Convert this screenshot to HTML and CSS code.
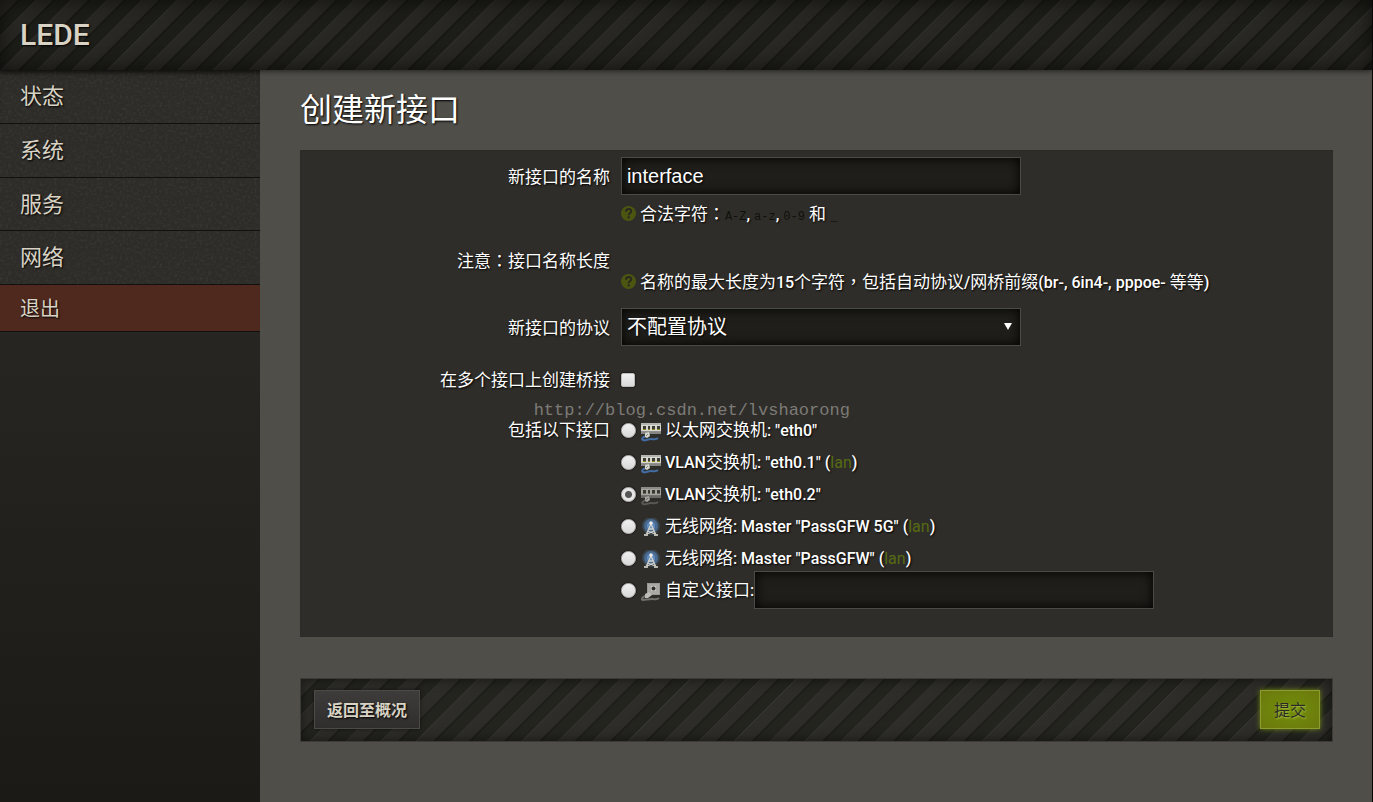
FILE: index.html
```html
<!DOCTYPE html>
<html lang="zh-CN">
<head>
<meta charset="utf-8">
<title>LEDE - 创建新接口</title>
<link rel="stylesheet" href="styles.css">
</head>
<body>
<svg class="defs" width="0" height="0" aria-hidden="true">
  <defs>
    <symbol id="help" viewBox="0 0 15 15">
      <circle cx="7.500" cy="7.500" r="7.500" fill="#4d5611"/>
      <path d="M5 5.800C5 4 6.100 3.100 7.600 3.100S10.200 4 10.200 5.400C10.200 7 7.700 7.100 7.700 9.300" fill="none" stroke="#292a1d" stroke-width="2"/>
      <rect x="6.600" y="10.300" width="2.200" height="2" fill="#292a1d"/>
    </symbol>
    <symbol id="switch" viewBox="0 0 20 20">
      <path d="M0 1h20v11H0z" fill="#8f8f8b"/>
      <path d="M0 1h20v2H0z" fill="#b4b4b0"/>
      <path d="M0 3h20v6H0z" fill="#d9d8d0"/>
      <path d="M2 4h3v3H2zM7 4h2v3H7zM11 4h3v3h-3zM16 4h3v3h-3z" fill="#3c3c33"/>
      <path d="M0 10h20v2H0z" fill="#858581"/>
      <path class="lamp" d="M2 7h3v1H2zM7 7h2v1H7zM11 7h3v1h-3zM16 7h3v1h-3z"/>
      <path class="cable" d="M5 14c-3 1-5 3-3 4 2 1 5-1 8-1s5 1 7-1" fill="none" stroke-width="2"/>
      <path d="M4 11l4-1 1 4-3 2-2-1z" fill="#d5d5ce"/>
      <path d="M5 14l2-2" stroke="#888882"/>
    </symbol>
    <symbol id="wifi" viewBox="0 0 20 20">
      <circle cx="10" cy="8" r="9" fill="#4c7297" opacity=".35"/>
      <circle cx="10" cy="8" r="7" fill="#5280b5" opacity=".65"/>
      <circle cx="10" cy="8" r="4" fill="#6998cf" opacity=".75"/>
      <path d="M10 6l-5 11M10 6l5 11M7 13l7 3M13 13l-7 3M8 11h4" fill="none" stroke="#d2d1c9" stroke-width="1.300"/>
      <path d="M3 17h4M13 17h4" stroke="#b8b8b1" stroke-width="2"/>
      <circle cx="10" cy="5" r="1.800" fill="#eeeeea"/>
    </symbol>
    <symbol id="adapter" viewBox="0 0 20 20">
      <path d="M6 1h13v12H6z" fill="#9a9a95"/>
      <path d="M7 2h11v10H7z" fill="#aaa9a5"/>
      <path d="M10 4h5v5h-5z" fill="#c9c9c3"/>
      <circle cx="12.500" cy="6.500" r="2" fill="#302f2b"/>
      <path d="M4 14c-3 1-4 4-2 4s6-1 9-1 5 1 7-1" fill="none" stroke="#73726e" stroke-width="2"/>
      <path d="M4 12l4-2 3 3-4 3H4z" fill="#bdbdb7"/>
    </symbol>
  </defs>
</svg>

<header class="topbar"><a class="brand" href="#">LEDE</a></header>

<div class="layout">
  <nav class="sidebar">
    <a class="nav-item" href="#">状态</a>
    <a class="nav-item" href="#">系统</a>
    <a class="nav-item" href="#">服务</a>
    <a class="nav-item" href="#">网络</a>
    <a class="nav-item logout" href="#">退出</a>
  </nav>

  <main class="content">
    <h1 class="title">创建新接口</h1>
    <form>
      <div class="panel">
        <div class="row name-row">
          <label class="label tall" for="name">新接口的名称</label>
          <div class="field">
            <input class="text" id="name" type="text" value="interface">
            <p class="hint"><svg class="help"><use href="#help"/></svg>合法字符<span class="mark" lang="zh-TW">：</span><code>A-Z</code><b>, </b><code>a-z</code><b>, </b><code>0-9</code> 和 <code>_</code></p>
          </div>
        </div>
        <div class="row length-row">
          <span class="label">注意<span class="mark" lang="zh-TW">：</span>接口名称长度</span>
          <div class="field">
            <p class="hint lowered"><svg class="help"><use href="#help"/></svg>名称的最大长度为<b>15</b>个字符<span class="mark" lang="zh-TW">，</span>包括自动协议<b>/</b>网桥前缀<b>(br-, 6in4-, pppoe- </b>等等<b>)</b></p>
          </div>
        </div>
        <div class="row">
          <label class="label tall" for="proto">新接口的协议</label>
          <div class="field">
            <span class="select-box"><select class="text select" id="proto"><option>不配置协议</option></select></span>
          </div>
        </div>
        <div class="row">
          <label class="label" for="bridge">在多个接口上创建桥接</label>
          <div class="field check-field"><input class="check" id="bridge" type="checkbox"></div>
        </div>
        <div class="row">
          <span class="label ports-label" id="ports">包括以下接口</span>
          <div class="field ports" role="radiogroup" aria-labelledby="ports">
            <span class="watermark">http://blog.csdn.net/lvshaorong</span>
            <div class="port"><input class="radio" type="radio" name="port" id="p0"><label class="port-name" for="p0"><svg class="icon live"><use href="#switch"/></svg><span>以太网交换机<b>: "eth0"</b></span></label></div>
            <div class="port"><input class="radio" type="radio" name="port" id="p1"><label class="port-name" for="p1"><svg class="icon live"><use href="#switch"/></svg><span><b>VLAN</b>交换机<b>: "eth0.1" (<a class="net" href="#">lan</a>)</b></span></label></div>
            <div class="port"><input class="radio" type="radio" name="port" id="p2" checked><label class="port-name" for="p2"><svg class="icon off"><use href="#switch"/></svg><span><b>VLAN</b>交换机<b>: "eth0.2"</b></span></label></div>
            <div class="port"><input class="radio" type="radio" name="port" id="p3"><label class="port-name" for="p3"><svg class="icon"><use href="#wifi"/></svg><span>无线网络<b>: Master "PassGFW 5G" (<a class="net" href="#">lan</a>)</b></span></label></div>
            <div class="port"><input class="radio" type="radio" name="port" id="p4"><label class="port-name" for="p4"><svg class="icon"><use href="#wifi"/></svg><span>无线网络<b>: Master "PassGFW" (<a class="net" href="#">lan</a>)</b></span></label></div>
            <div class="port"><input class="radio" type="radio" name="port" id="p5"><label class="port-name" for="p5"><svg class="icon"><use href="#adapter"/></svg><span>自定义接口<b>:</b></span></label><input class="text" type="text" aria-label="自定义接口"></div>
          </div>
        </div>
      </div>
      <div class="actions">
        <button class="button back" type="button">返回至概况</button>
        <button class="button submit" type="submit">提交</button>
      </div>
    </form>
  </main>
</div>
</body>
</html>
```
FILE: styles.css
```css
* { box-sizing: border-box; }

body {
  margin: 0;
  min-height: 100vh;
  display: flex;
  flex-direction: column;
  background: #4f4e49;
  border-right: 1px solid #080807;
  color: #fff;
  font: 17px/24px Roboto, "Noto Sans CJK SC", sans-serif;
  text-shadow: 1px 1px 2px #000;
}

b { font-weight: 500; font-size: 16px; }
.defs { position: absolute; }
.mark { font-family: "Noto Sans CJK TC", sans-serif; line-height: 1; }

.topbar {
  position: relative;
  height: 70px;
  display: flex;
  align-items: center;
  padding: 0 20px;
  background: repeating-linear-gradient(135deg,
    #30312c 0, #292824 1px, #272622 12px,
    #151611 13px, #1c1d18 15px, #1c1d18 25px);
  box-shadow: inset 0 0 20px #0009, 0 1px 6px #0009;
}

.brand {
  color: #d8d3c4;
  font-size: 30px;
  font-weight: 500;
  line-height: 40px;
  text-decoration: none;
}

.layout { flex: 1; display: flex; }

.sidebar {
  width: 260px;
  flex: none;
  background: linear-gradient(#2d2c28, #1b1a16);
}

.nav-item {
  display: block;
  height: 54px;
  padding-left: 20px;
  border-bottom: 1px solid #10100e;
  background: url("data:image/svg+xml,%3Csvg xmlns='http://www.w3.org/2000/svg' width='100' height='54'%3E%3Cfilter id='n'%3E%3CfeTurbulence type='fractalNoise' baseFrequency='.35' numOctaves='3' stitchTiles='stitch'/%3E%3CfeColorMatrix values='0 0 0 0 .5 0 0 0 0 .5 0 0 0 0 .45 .9 0 0 0 -.42'/%3E%3C/filter%3E%3Crect width='100' height='54' filter='url(%23n)' opacity='.2'/%3E%3C/svg%3E") #2d2c28;
  color: #d8d3c4;
  font-size: 22px;
  line-height: 54px;
  text-decoration: none;
}

.nav-item:first-child { box-shadow: inset 0 5px 5px -3px #0007; }

.nav-item:nth-child(3) { height: 53px; }

.nav-item.logout {
  height: 47px;
  background: #50291e;
  font-size: 20px;
  line-height: 48px;
}

.content { flex: 1; min-width: 0; padding: 20px 39px 20px 40px; }

.title {
  margin: 0 0 20px;
  font-size: 32px;
  font-weight: 400;
  line-height: 40px;
}

.panel {
  padding: 7px 0 9px;
  background: #2f2d29;
  box-shadow: inset 0 0 1px #201f1c;
}

.row {
  display: grid;
  grid-template-columns: 30% 1fr;
  column-gap: 11px;
  margin-bottom: 22px;
}
.name-row { margin-bottom: 23px; }
.length-row { margin-bottom: 14px; }

.label { text-align: right; }
.tall { height: 38px; line-height: 40px; }
.ports-label { line-height: 32px; }

.text {
  width: 400px;
  height: 38px;
  padding: 0 5px;
  border: 1px solid #4b4a46;
  border-radius: 0;
  background: #1f1e1a;
  box-shadow: inset 0 0 12px #000;
  color: #fff;
  font: 20px "Liberation Sans", "Noto Sans CJK SC", sans-serif;
  text-shadow: inherit;
}

.field > .text { display: block; }
.select-box { position: relative; display: block; width: 400px; }
.select { display: block; appearance: none; }
.select-box::after {
  content: "";
  position: absolute;
  right: 9px;
  top: 15px;
  border: 4px solid transparent;
  border-top: 7px solid #fff;
  border-bottom: 0;
}

.hint { height: 24px; margin: 7px 0 0; }
.lowered { margin-top: 21px; }
.help { width: 15px; height: 15px; margin-right: 4px; vertical-align: -1px; }

code {
  color: #10100d;
  font: 12px "Liberation Mono", monospace;
  text-shadow: none;
}

.check-field { display: flex; align-items: center; }

.check, .radio {
  appearance: none;
  flex: none;
  margin: 0;
  border: 1px solid #bcbcbc;
  background: linear-gradient(#f0f0f0, #d9d9d9);
  box-shadow: 0 0 2px #000;
}
.check { width: 14px; height: 14px; border-radius: 2px; }
.radio { width: 15px; height: 15px; border-radius: 50%; }
.radio:checked { background: radial-gradient(circle, #555 3px, #e5e5e5 4px); }

.ports { position: relative; }
.port { display: flex; align-items: center; height: 32px; }
.port-name { display: flex; align-items: center; margin-left: 5px; white-space: nowrap; }
.icon { width: 20px; height: 20px; margin: 4px 4px 0 0; }
.live { color: #426da2; fill: #8b8422; }
.off { color: #6a6966; fill: #777; opacity: .7; }
.cable { stroke: currentColor; }
.net { color: #566b12; font-weight: 400; text-decoration: none; text-shadow: none; }

.watermark {
  position: absolute;
  right: calc(100% - 229px);
  top: -15px;
  color: #7c7b77;
  font: 17px/24px "Liberation Mono", monospace;
  text-shadow: none;
}

.actions {
  display: flex;
  justify-content: space-between;
  align-items: center;
  height: 64px;
  margin-top: 41px;
  padding: 0 12px 2px 13px;
  border: 1px solid #3c3b37;
  background: repeating-linear-gradient(135deg,
    #373833 0, #2e2d29 1px, #2d2c28 12px,
    #1b1c17 13px, #23241e 15px, #23241e 25px);
  box-shadow: inset 0 0 12px #0008;
}

.button {
  height: 39px;
  border: 1px solid #4b4a46;
  font: 16px "Noto Sans CJK SC", sans-serif;
}
.back {
  padding: 0 12px;
  background: linear-gradient(#3e3c3a, #302e2c);
  box-shadow: 0 0 4px #0008;
  color: #d8d3c4;
  font-weight: 700;
  text-shadow: 1px 1px 2px #000;
}
.submit {
  padding: 0 13px;
  border-color: #8b9d31;
  background: radial-gradient(#708e0a, #6c780d);
  box-shadow: 0 0 5px #738b12;
  color: #292a25;
  text-shadow: 1px 1px 2px #b3c34c;
}
```
